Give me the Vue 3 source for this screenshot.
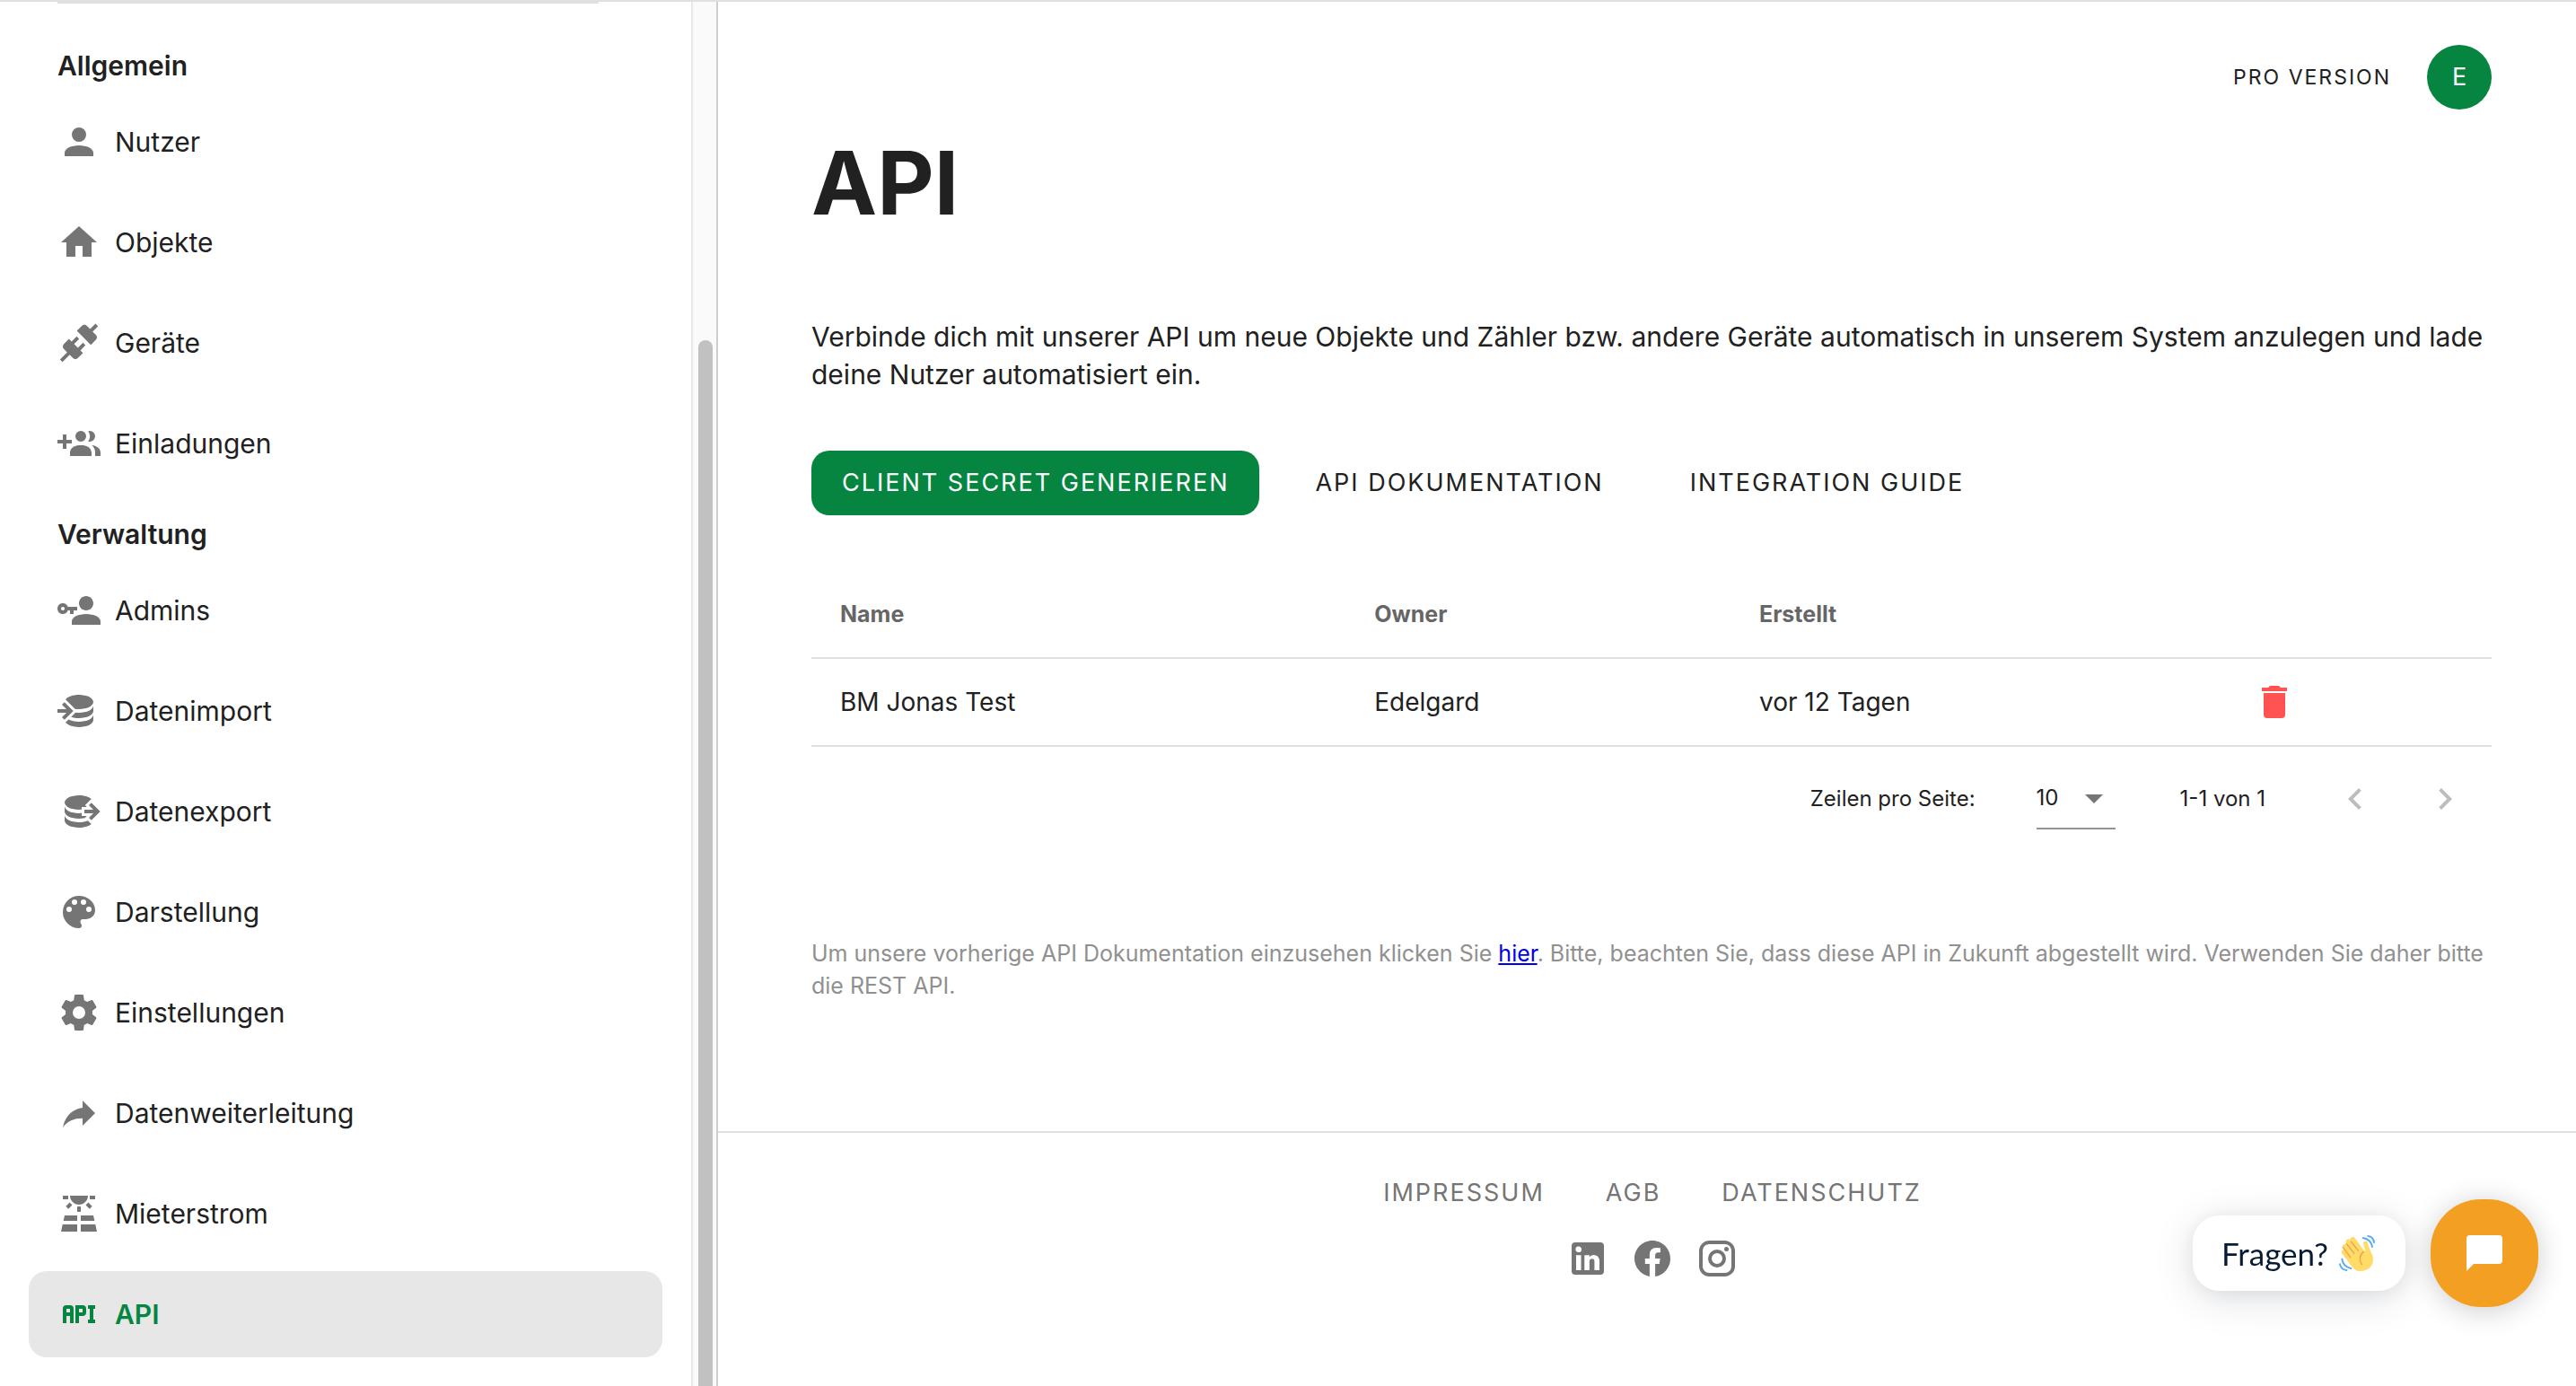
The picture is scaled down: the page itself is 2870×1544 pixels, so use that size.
<script setup>
import { ref } from 'vue'

const icons = {
  account: 'M12,4A4,4 0 0,1 16,8A4,4 0 0,1 12,12A4,4 0 0,1 8,8A4,4 0 0,1 12,4M12,14C16.42,14 20,15.79 20,18V20H4V18C4,15.79 7.58,14 12,14Z',
  home: 'M10,20V14H14V20H19V12H22L12,3L2,12H5V20H10Z',
  connection: 'M21.4 7.5C22.2 8.3 22.2 9.6 21.4 10.3L18.6 13.1L10.8 5.3L13.6 2.5C14.4 1.7 15.7 1.7 16.4 2.5L18.2 4.3L21.2 1.3L22.6 2.7L19.6 5.7L21.4 7.5M15.6 13.3L14.2 11.9L11.4 14.7L9.3 12.6L12.1 9.8L10.7 8.4L7.9 11.2L6.4 9.8L3.6 12.6C2.8 13.4 2.8 14.7 3.6 15.4L5.4 17.2L1.4 21.2L2.8 22.6L6.8 18.6L8.6 20.4C9.4 21.2 10.7 21.2 11.4 20.4L14.2 17.6L12.8 16.2L15.6 13.3Z',
  invite: 'M19,17V19H7V17S7,13 13,13 19,17 19,17M16,8A3,3 0 1,0 13,11A3,3 0 0,0 16,8M19.2,13.06A5.6,5.6 0 0,1 21,17V19H24V17S24,13.55 19.2,13.06M18,5A2.91,2.91 0 0,0 17.11,5.14A5,5 0 0,1 17.11,10.86A2.91,2.91 0 0,0 18,11A3,3 0 0,0 18,5M8,10H5V7H3V10H0V12H3V15H5V12H8Z',
  accountKey: 'M11 10V12H9V14H7V12H5.8C5.4 13.2 4.3 14 3 14C1.3 14 0 12.7 0 11S1.3 8 3 8C4.3 8 5.4 8.8 5.8 10H11M3 10C2.4 10 2 10.4 2 11S2.4 12 3 12 4 11.6 4 11 3.6 10 3 10M16,14C20.42,14 24,15.79 24,18V20H8V18C8,15.79 11.58,14 16,14M16 12C13.8 12 12 10.2 12 8S13.8 4 16 4 20 5.8 20 8 18.2 12 16 12Z',
  dbImport: 'M12,3C8.59,3 5.69,4.07 4.54,5.57L9.79,10.82C10.5,10.93 11.22,11 12,11C16.42,11 20,9.21 20,7C20,4.79 16.42,3 12,3M3.92,7.08L2.5,8.5L5,11H0V13H5L2.5,15.5L3.92,16.92L8.84,12M20,9C20,11.21 16.42,13 12,13C11.34,13 10.7,12.95 10.09,12.87L7.62,15.34C8.88,15.75 10.38,16 12,16C16.42,16 20,14.21 20,12M20,14C20,16.21 16.42,18 12,18C9.72,18 7.67,17.5 6.21,16.75L4.53,18.43C5.68,19.93 8.59,21 12,21C16.42,21 20,19.21 20,17',
  dbExport: 'M12,3C7.58,3 4,4.79 4,7C4,9.21 7.58,11 12,11C12.5,11 13,10.97 13.5,10.92V9.5H16.39L15.39,8.5L18.9,5C17.5,3.8 14.94,3 12,3M18.92,7.08L17.5,8.5L20,11H15V13H20L17.5,15.5L18.92,16.92L23.84,12M4,9V12C4,14.21 7.58,16 12,16C13.17,16 14.26,15.85 15.25,15.63L16.38,14.5H13.5V12.92C13,12.97 12.5,13 12,13C7.58,13 4,11.21 4,9M4,14V17C4,19.21 7.58,21 12,21C14.94,21 17.5,20.2 18.9,19L17,17.1C15.61,17.66 13.9,18 12,18C7.58,18 4,16.21 4,14Z',
  palette: 'M17.5,12A1.5,1.5 0 0,1 16,10.5A1.5,1.5 0 0,1 17.5,9A1.5,1.5 0 0,1 19,10.5A1.5,1.5 0 0,1 17.5,12M14.5,8A1.5,1.5 0 0,1 13,6.5A1.5,1.5 0 0,1 14.5,5A1.5,1.5 0 0,1 16,6.5A1.5,1.5 0 0,1 14.5,8M9.5,8A1.5,1.5 0 0,1 8,6.5A1.5,1.5 0 0,1 9.5,5A1.5,1.5 0 0,1 11,6.5A1.5,1.5 0 0,1 9.5,8M6.5,12A1.5,1.5 0 0,1 5,10.5A1.5,1.5 0 0,1 6.5,9A1.5,1.5 0 0,1 8,10.5A1.5,1.5 0 0,1 6.5,12M12,3A9,9 0 0,0 3,12A9,9 0 0,0 12,21A1.5,1.5 0 0,0 13.5,19.5C13.5,19.11 13.35,18.76 13.11,18.5C12.88,18.23 12.73,17.88 12.73,17.5A1.5,1.5 0 0,1 14.23,16H16A5,5 0 0,0 21,11C21,6.58 16.97,3 12,3Z',
  cog: 'M12,15.5A3.5,3.5 0 0,1 8.5,12A3.5,3.5 0 0,1 12,8.5A3.5,3.5 0 0,1 15.5,12A3.5,3.5 0 0,1 12,15.5M19.43,12.97C19.47,12.65 19.5,12.33 19.5,12C19.5,11.67 19.47,11.34 19.43,11L21.54,9.37C21.73,9.22 21.78,8.95 21.66,8.73L19.66,5.27C19.54,5.05 19.27,4.96 19.05,5.05L16.56,6.05C16.04,5.66 15.5,5.32 14.87,5.07L14.5,2.42C14.46,2.18 14.25,2 14,2H10C9.75,2 9.54,2.18 9.5,2.42L9.13,5.07C8.5,5.32 7.96,5.66 7.44,6.05L4.95,5.05C4.73,4.96 4.46,5.05 4.34,5.27L2.34,8.73C2.21,8.95 2.27,9.22 2.46,9.37L4.57,11C4.53,11.34 4.5,11.67 4.5,12C4.5,12.33 4.53,12.65 4.57,12.97L2.46,14.63C2.27,14.78 2.21,15.05 2.34,15.27L4.34,18.73C4.46,18.95 4.73,19.03 4.95,18.95L7.44,17.94C7.96,18.34 8.5,18.68 9.13,18.93L9.5,21.58C9.54,21.82 9.75,22 10,22H14C14.25,22 14.46,21.82 14.5,21.58L14.87,18.93C15.5,18.67 16.04,18.34 16.56,17.94L19.05,18.95C19.27,19.03 19.54,18.95 19.66,18.73L21.66,15.27C21.78,15.05 21.73,14.78 21.54,14.63L19.43,12.97Z',
  share: 'M21,12L14,5V9C7,10 4,15 3,20C5.5,16.5 9,14.9 14,14.9V19L21,12Z',
  solar: 'M3.33 16H11V13H4L3.33 16M13 16H20.67L20 13H13V16M21.11 18H13V22H22L21.11 18M2 22H11V18H2.89L2 22M11 8H13V11H11V8M15.76 7.21L17.18 5.79L19.3 7.91L17.89 9.33L15.76 7.21M4.71 7.91L6.83 5.79L8.24 7.21L6.12 9.33L4.71 7.91M3 2H6V4H3V2M18 2H21V4H18V2M12 7C14.76 7 17 4.76 17 2H7C7 4.76 9.24 7 12 7Z',
  api: 'M7 7H5A2 2 0 0 0 3 9V17H5V13H7V17H9V9A2 2 0 0 0 7 7M7 11H5V9H7M14 7H10V17H12V13H14A2 2 0 0 0 16 11V9A2 2 0 0 0 14 7M14 11H12V9H14M20 9V15H21V17H17V15H18V9H17V7H21V9Z',
  trash: 'M19,4H15.5L14.5,3H9.5L8.5,4H5V6H19M6,19A2,2 0 0,0 8,21H16A2,2 0 0,0 18,19V7H6V19Z',
  linkedin: 'M19 3A2 2 0 0 1 21 5V19A2 2 0 0 1 19 21H5A2 2 0 0 1 3 19V5A2 2 0 0 1 5 3H19M18.5 18.5V13.2A3.26 3.26 0 0 0 15.24 9.94C14.39 9.94 13.4 10.46 12.92 11.24V10.13H10.13V18.5H12.92V13.57C12.92 12.8 13.54 12.17 14.31 12.17A1.4 1.4 0 0 1 15.71 13.57V18.5H18.5M6.88 8.56A1.68 1.68 0 0 0 8.56 6.88C8.56 5.95 7.81 5.19 6.88 5.19A1.69 1.69 0 0 0 5.19 6.88C5.19 7.81 5.95 8.56 6.88 8.56M8.27 18.5V10.13H5.5V18.5H8.27Z',
  facebook: 'M12 2.04C6.5 2.04 2 6.53 2 12.06C2 17.06 5.66 21.21 10.44 21.96V14.96H7.9V12.06H10.44V9.85C10.44 7.34 11.93 5.96 14.22 5.96C15.31 5.96 16.45 6.15 16.45 6.15V8.62H15.19C13.95 8.62 13.56 9.39 13.56 10.18V12.06H16.34L15.89 14.96H13.56V21.96A10 10 0 0 0 22 12.06C22 6.53 17.5 2.04 12 2.04Z',
  instagram: 'M7.8,2H16.2C19.4,2 22,4.6 22,7.8V16.2A5.8,5.8 0 0,1 16.2,22H7.8C4.6,22 2,19.4 2,16.2V7.8A5.8,5.8 0 0,1 7.8,2M7.6,4A3.6,3.6 0 0,0 4,7.6V16.4C4,18.39 5.61,20 7.6,20H16.4A3.6,3.6 0 0,0 20,16.4V7.6C20,5.61 18.39,4 16.4,4H7.6M17.25,5.5A1.25,1.25 0 0,1 18.5,6.75A1.25,1.25 0 0,1 17.25,8A1.25,1.25 0 0,1 16,6.75A1.25,1.25 0 0,1 17.25,5.5M12,7A5,5 0 0,1 17,12A5,5 0 0,1 12,17A5,5 0 0,1 7,12A5,5 0 0,1 12,7M12,9A3,3 0 0,0 9,12A3,3 0 0,0 12,15A3,3 0 0,0 15,12A3,3 0 0,0 12,9Z',
}

const groups = [
  {
    title: 'Allgemein',
    items: [
      { label: 'Nutzer', icon: icons.account },
      { label: 'Objekte', icon: icons.home },
      { label: 'Geräte', icon: icons.connection },
      { label: 'Einladungen', icon: icons.invite },
    ],
  },
  {
    title: 'Verwaltung',
    items: [
      { label: 'Admins', icon: icons.accountKey },
      { label: 'Datenimport', icon: icons.dbImport },
      { label: 'Datenexport', icon: icons.dbExport },
      { label: 'Darstellung', icon: icons.palette },
      { label: 'Einstellungen', icon: icons.cog },
      { label: 'Datenweiterleitung', icon: icons.share },
      { label: 'Mieterstrom', icon: icons.solar },
      { label: 'API', icon: icons.api, active: true },
    ],
  },
]

const clients = [{ name: 'BM Jonas Test', owner: 'Edelgard', created: 'vor 12 Tagen' }]
const socials = [
  { label: 'LinkedIn', icon: icons.linkedin },
  { label: 'Facebook', icon: icons.facebook },
  { label: 'Instagram', icon: icons.instagram },
]
const pageSize = ref('10')
</script>

<template>
  <div class="app">
    <aside class="sidebar">
      <nav class="nav">
        <section v-for="group in groups" :key="group.title">
          <h2 class="nav-title">{{ group.title }}</h2>
          <ul class="nav-list">
            <li v-for="item in group.items" :key="item.label">
              <a href="#" class="nav-item" :class="{ active: item.active }">
                <svg class="icon" viewBox="0 0 24 24" aria-hidden="true"><path :d="item.icon" /></svg>
                <span>{{ item.label }}</span>
              </a>
            </li>
          </ul>
        </section>
      </nav>
      <div class="scroll-track"><div class="scroll-thumb"></div></div>
    </aside>

    <div class="page">
      <main class="content">
        <header class="topbar">
          <span class="plan">PRO VERSION</span>
          <button class="avatar" type="button">E</button>
        </header>

        <h1>API</h1>
        <p class="intro">
          Verbinde dich mit unserer API um neue Objekte und Zähler bzw. andere Geräte automatisch in unserem System anzulegen und lade deine Nutzer automatisiert ein.
        </p>

        <div class="actions">
          <button class="btn primary" type="button">CLIENT SECRET GENERIEREN</button>
          <a class="btn" href="#">API DOKUMENTATION</a>
          <a class="btn" href="#">INTEGRATION GUIDE</a>
        </div>

        <table class="clients">
          <thead>
            <tr>
              <th class="col-name" scope="col">Name</th>
              <th class="col-owner" scope="col">Owner</th>
              <th class="col-created" scope="col">Erstellt</th>
              <th scope="col"></th>
            </tr>
          </thead>
          <tbody>
            <tr v-for="client in clients" :key="client.name">
              <td>{{ client.name }}</td>
              <td>{{ client.owner }}</td>
              <td>{{ client.created }}</td>
              <td>
                <button class="icon-btn danger" type="button" aria-label="Löschen">
                  <svg class="icon" viewBox="0 0 24 24" aria-hidden="true"><path :d="icons.trash" /></svg>
                </button>
              </td>
            </tr>
          </tbody>
        </table>

        <div class="pagination">
          <label for="page-size">Zeilen pro Seite:</label>
          <div class="select">
            <select id="page-size" v-model="pageSize">
              <option>10</option>
              <option>25</option>
              <option>50</option>
            </select>
            <svg class="icon caret" viewBox="0 0 24 24" aria-hidden="true"><path d="M7,10L12,15L17,10H7Z" /></svg>
          </div>
          <span class="range">1-1 von 1</span>
          <div class="pager">
            <button class="icon-btn" type="button" disabled aria-label="Vorherige Seite">
              <svg class="icon" viewBox="0 0 24 24" aria-hidden="true"><path d="M15.41,16.58L10.83,12L15.41,7.41L14,6L8,12L14,18L15.41,16.58Z" /></svg>
            </button>
            <button class="icon-btn" type="button" disabled aria-label="Nächste Seite">
              <svg class="icon" viewBox="0 0 24 24" aria-hidden="true"><path d="M8.59,16.58L13.17,12L8.59,7.41L10,6L16,12L10,18L8.59,16.58Z" /></svg>
            </button>
          </div>
        </div>

        <p class="note">
          Um unsere vorherige API Dokumentation einzusehen klicken Sie <a href="#">hier</a>. Bitte, beachten Sie, dass diese API in Zukunft abgestellt wird. Verwenden Sie daher bitte die REST API.
        </p>
      </main>

      <footer class="footer">
        <div class="legal">
          <a href="#">IMPRESSUM</a>
          <a href="#">AGB</a>
          <a href="#">DATENSCHUTZ</a>
        </div>
        <div class="socials">
          <a v-for="social in socials" :key="social.label" href="#" :aria-label="social.label">
            <svg class="icon" viewBox="0 0 24 24" aria-hidden="true"><path :d="social.icon" /></svg>
          </a>
        </div>
      </footer>
    </div>

    <div class="chat">
      <div class="chat-bubble">
        <span>Fragen?</span>
        <svg class="wave" viewBox="0 0 120 120" fill="none" stroke-linecap="round" aria-hidden="true">
          <g stroke="#ffdb68" stroke-width="17">
            <path d="M46 14L84 66M31 22L70 74M20 38L60 86M17 56L50 98" />
            <path d="M89 28C90 42 98 50 103 70" stroke-width="15" />
          </g>
          <path fill="#ffdb68" d="M22 40L48 20L84 58L94 42C104 50 114 66 114 82C114 106 94 120 72 120C54 120 44 108 34 92L10 60Z" />
          <g stroke="#f0a04b" stroke-width="4">
            <path d="M40 21L64 52M25 28L51 62M13 40L38 74M83 55C68 64 66 82 76 98" />
          </g>
          <g stroke="#5dadec" stroke-width="6">
            <path d="M97 3C108 4 115 11 117 24M80 9C96 12 108 22 111 39M3 97C5 108 13 115 25 117M10 80C12 96 22 107 40 111" />
          </g>
        </svg>
      </div>
      <button class="chat-btn" type="button" aria-label="Chat öffnen">
        <svg viewBox="0 0 40 40" aria-hidden="true"><path d="M4 0H36A4 4 0 0 1 40 4V28A4 4 0 0 1 36 32H8L0 40V4A4 4 0 0 1 4 0Z" /></svg>
      </button>
    </div>
  </div>
</template>

<style>
body {
  margin: 0;
  background: #fff;
}
</style>

<style scoped>
* {
  box-sizing: border-box;
}
.app {
  display: flex;
  min-height: 100vh;
  border-top: 2px solid #e0e0e0;
  color: #212121;
  font-family: Inter, "Open Sans", sans-serif;
  font-size: 30px;
  line-height: 42px;
}
h1,
h2,
p,
ul {
  margin: 0;
  padding: 0;
}
a {
  color: inherit;
  text-decoration: none;
}
button,
select {
  margin: 0;
  padding: 0;
  border: 0;
  background: none;
  color: inherit;
  font: inherit;
}
.icon {
  display: block;
  flex: none;
  width: 48px;
  height: 48px;
  fill: currentColor;
}

.sidebar {
  display: flex;
  flex: none;
  width: 800px;
  border-right: 2px solid #cecece;
}
.nav {
  flex: 1;
  padding: 0 32px 32px;
}
.nav::before {
  content: "";
  display: block;
  height: 2px;
  margin: 0 71px 16px 32px;
  background: #e0e0e0;
}
.nav-title {
  padding: 32px 32px 16px;
  font-size: 30px;
  line-height: 42px;
  font-weight: 600;
}
.nav-list {
  display: flex;
  flex-direction: column;
  gap: 16px;
  list-style: none;
}
.nav-item {
  display: flex;
  align-items: center;
  gap: 16px;
  height: 96px;
  padding: 0 32px;
  border-radius: 20px;
}
.nav-item .icon {
  color: #757575;
}
.nav-item.active,
.nav-item.active .icon {
  color: #05853f;
}
.nav-item.active {
  background: #e7e7e7;
  font-weight: 600;
}
.scroll-track {
  display: flex;
  width: 28px;
  padding: 377px 4px 0 6px;
  border-left: 2px solid #e8e8e8;
  background: #fafafa;
}
.scroll-thumb {
  flex: 1;
  border-radius: 8px 8px 0 0;
  background: #c1c1c1;
}

.page {
  flex: 1;
  min-width: 0;
}
.content {
  padding: 48px 94px 144px 104px;
}
.topbar {
  display: flex;
  align-items: center;
  justify-content: flex-end;
  gap: 40px;
  margin-bottom: 26px;
}
.plan {
  font-size: 23px;
  letter-spacing: 2px;
}
.avatar {
  width: 72px;
  height: 72px;
  border-radius: 50%;
  background: #05853f;
  color: #fff;
  font-size: 27px;
}
h1 {
  margin-bottom: 94px;
  font-size: 98px;
  line-height: 112px;
  font-weight: 700;
}
.intro {
  margin-bottom: 64px;
}
.actions {
  display: flex;
  gap: 28px;
  margin-bottom: 62px;
}
.btn {
  height: 72px;
  padding: 0 34px;
  border-radius: 20px;
  font-size: 27px;
  line-height: 72px;
  letter-spacing: 2px;
}
.btn.primary {
  background: #05853f;
  color: #fff;
}

.clients {
  width: 100%;
  table-layout: fixed;
  border-spacing: 0;
}
.clients th,
.clients td {
  height: 98px;
  padding: 0 32px;
  border-bottom: 2px solid #e0e0e0;
  font-size: 28px;
  text-align: left;
}
.clients th {
  color: #666;
  font-size: 25px;
  font-weight: 700;
}
.clients .col-name {
  width: 31.8%;
}
.clients .col-owner {
  width: 22.9%;
}
.clients .col-created {
  width: 29.4%;
}
.icon-btn {
  display: block;
}
.danger {
  color: #ff5252;
}

.pagination {
  display: flex;
  align-items: center;
  justify-content: flex-end;
  height: 116px;
  margin-bottom: 96px;
  padding-right: 28px;
  font-size: 24px;
}
.select {
  display: flex;
  align-items: center;
  position: relative;
  width: 88px;
  height: 68px;
  margin: 0 72px 0 68px;
  border-bottom: 2px solid #949494;
}
.select select {
  width: 100%;
  height: 66px;
  appearance: none;
}
.caret {
  position: absolute;
  right: 0;
  color: #757575;
  pointer-events: none;
}
.pager {
  display: flex;
  gap: 52px;
  margin-left: 76px;
}
.pager .icon-btn {
  color: #bdbdbd;
}
.note {
  color: #909090;
  font-size: 25px;
  line-height: 36px;
}
.note a {
  color: #0000ee;
  text-decoration: underline;
}

.footer {
  display: flex;
  flex-direction: column;
  align-items: center;
  gap: 28px;
  padding: 46px 92px 46px 104px;
  border-top: 2px solid #e0e0e0;
  color: #757575;
}
.legal {
  display: flex;
  gap: 68px;
  font-size: 27px;
  letter-spacing: 2px;
}
.socials {
  display: flex;
  gap: 24px;
}

.chat {
  position: fixed;
  right: 42px;
  bottom: 88px;
  display: flex;
  align-items: center;
  gap: 28px;
}
.chat-bubble {
  display: flex;
  align-items: center;
  gap: 12px;
  height: 84px;
  padding: 0 34px 0 32px;
  border-radius: 30px;
  background: #fff;
  box-shadow: 0 8px 48px rgba(8, 27, 51, 0.12), 0 4px 24px rgba(8, 27, 51, 0.08);
  color: #081b33;
  font-family: Lato, sans-serif;
  font-size: 35px;
}
.wave {
  width: 40px;
  height: 40px;
}
.chat-btn {
  display: grid;
  place-items: center;
  width: 120px;
  height: 120px;
  border-radius: 56px;
  background: #f29f22;
  box-shadow: 0 4px 32px rgba(0, 0, 0, 0.2);
}
.chat-btn svg {
  width: 40px;
  height: 40px;
  fill: #fff;
}
</style>
